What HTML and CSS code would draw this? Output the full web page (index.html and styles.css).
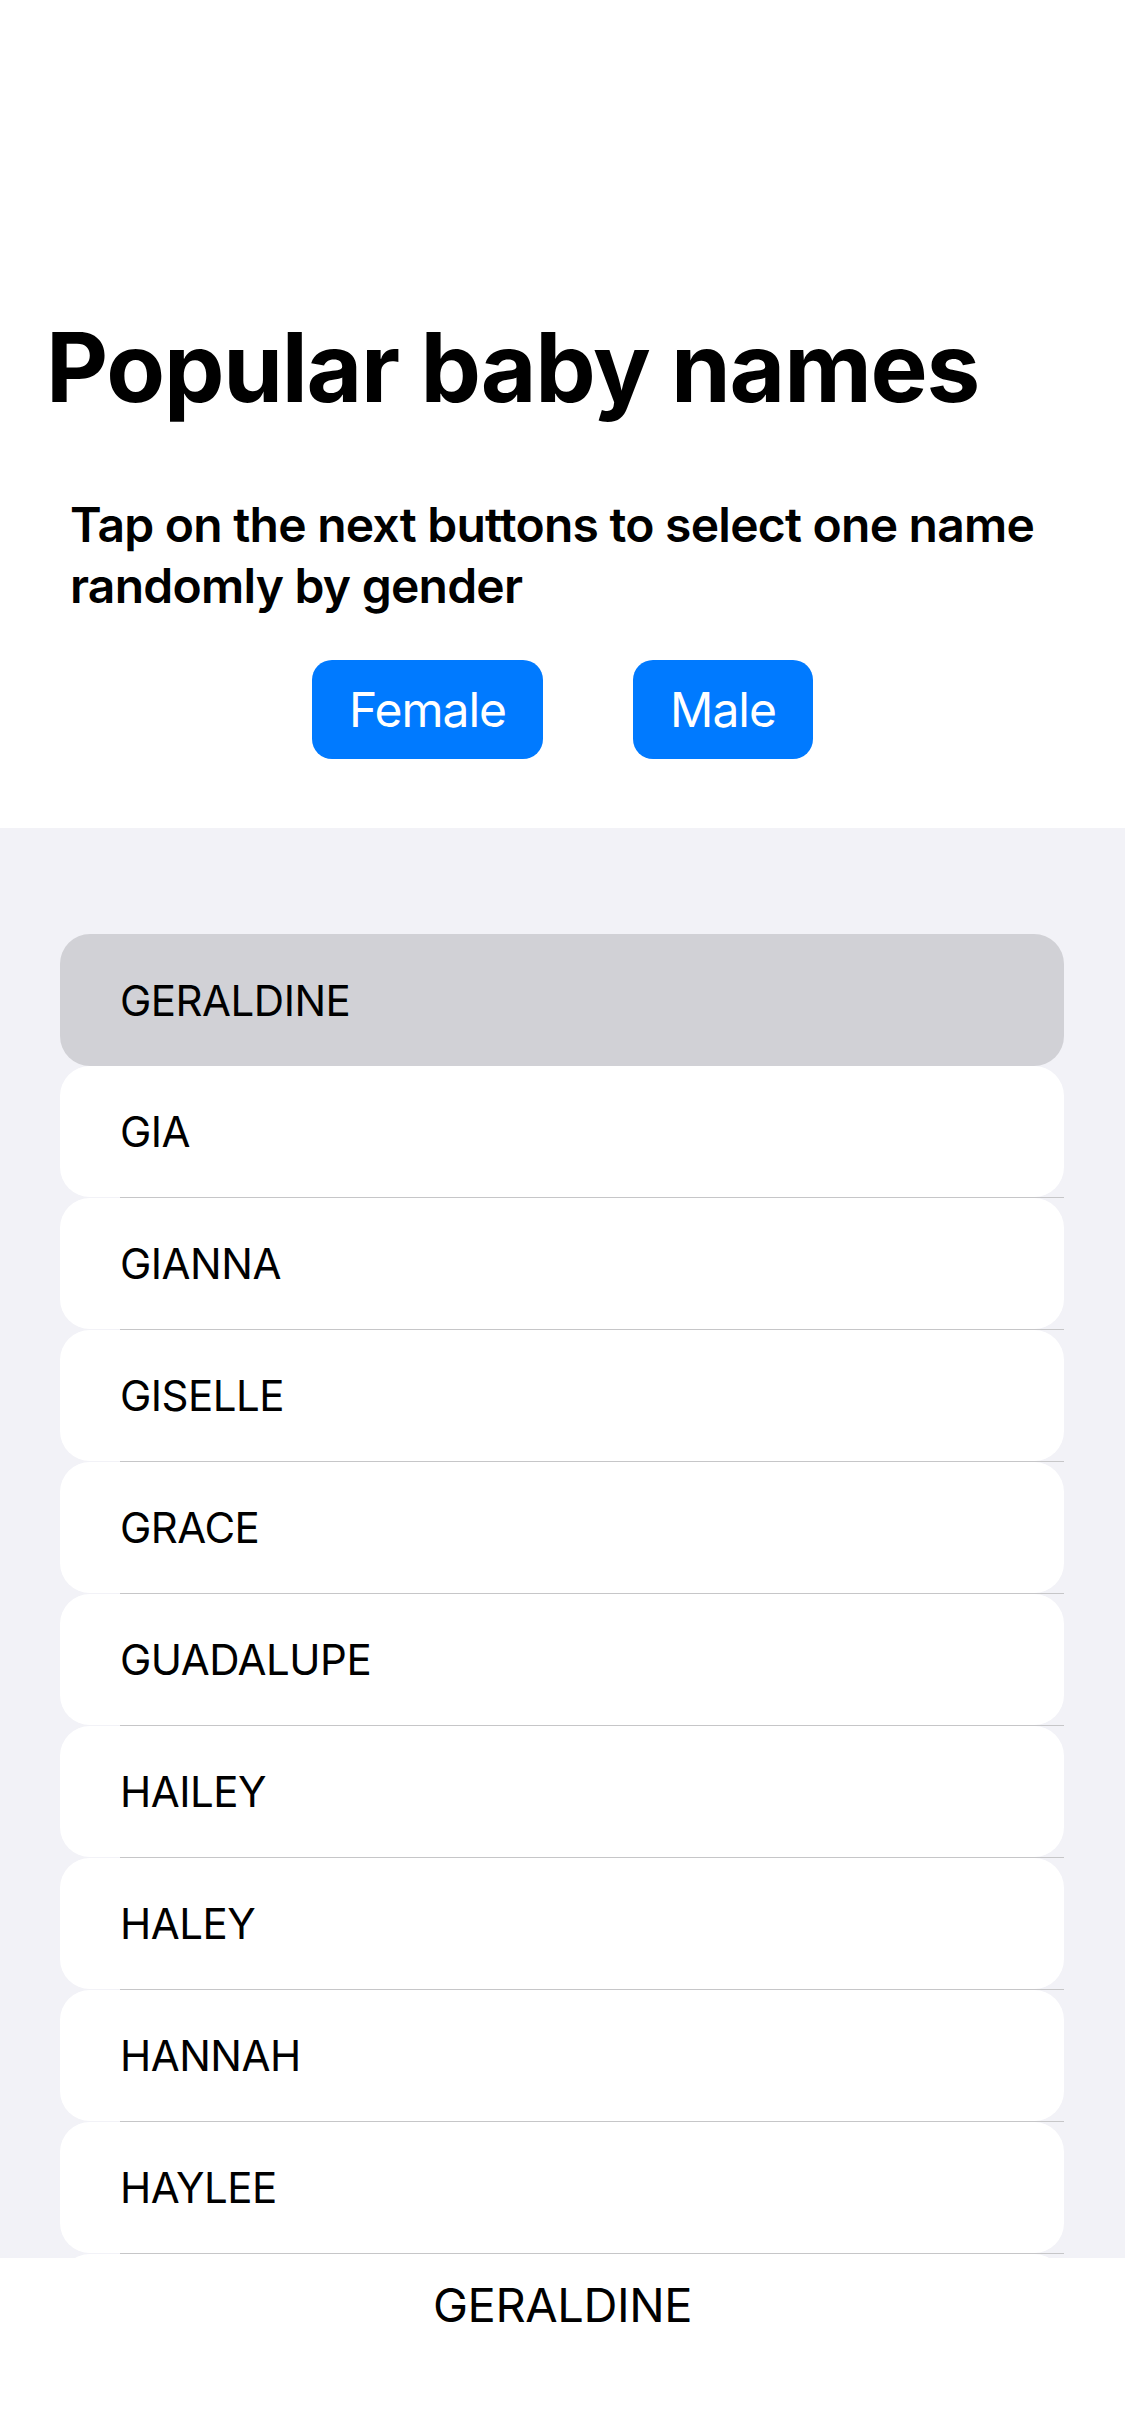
FILE: index.html
```html
<!DOCTYPE html>
<html lang="en">
<head>
<meta charset="utf-8">
<title>Popular baby names</title>
<link rel="stylesheet" href="styles.css">
</head>
<body>
<div class="screen">
  <header class="header">
    <h1 class="title">Popular baby names</h1>
    <p class="subtitle">Tap on the next buttons to select one name randomly by gender</p>
    <div class="buttons">
      <button class="btn">Female</button>
      <button class="btn">Male</button>
    </div>
  </header>
  <main class="list-area">
    <ul class="list">
      <li class="row selected">GERALDINE</li>
      <li class="row">GIA</li>
      <li class="sep"></li>
      <li class="row">GIANNA</li>
      <li class="sep"></li>
      <li class="row">GISELLE</li>
      <li class="sep"></li>
      <li class="row">GRACE</li>
      <li class="sep"></li>
      <li class="row">GUADALUPE</li>
      <li class="sep"></li>
      <li class="row">HAILEY</li>
      <li class="sep"></li>
      <li class="row">HALEY</li>
      <li class="sep"></li>
      <li class="row">HANNAH</li>
      <li class="sep"></li>
      <li class="row">HAYLEE</li>
      <li class="sep"></li>
      <li class="row"></li>
    </ul>
  </main>
  <footer class="footer">GERALDINE</footer>
</div>
</body>
</html>
```
FILE: styles.css
```css
* { box-sizing: border-box; }
html, body {
  margin: 0;
  padding: 0;
  background: #ffffff;
}
body {
  font-family: Inter, "Noto Sans", "Liberation Sans", sans-serif;
  color: #000000;
}
.screen {
  width: 1125px;
  height: 2436px;
  display: flex;
  flex-direction: column;
  overflow: hidden;
}
.header {
  background: #ffffff;
  padding: 309px 0 69px 0;
  flex: 0 0 auto;
}
.title {
  margin: 0;
  padding-left: 46px;
  font-size: 96px;
  line-height: 116px;
  font-weight: 700;
  letter-spacing: -1.2px;
}
.subtitle {
  margin: 69px 0 0 0;
  padding: 0 30px 0 70px;
  font-size: 48px;
  line-height: 61px;
  font-weight: 600;
  letter-spacing: -0.75px;
}
.buttons {
  margin-top: 44px;
  display: flex;
  justify-content: center;
  gap: 90px;
}
.btn {
  height: 99px;
  padding: 0 37px;
  border: none;
  border-radius: 20px;
  background: #007aff;
  color: #ffffff;
  font-family: Inter, "Noto Sans", "Liberation Sans", sans-serif;
  font-size: 48px;
  font-weight: 400;
  line-height: 99px;
  letter-spacing: -1px;
}
.list-area {
  flex: 1 1 auto;
  background: #f2f2f7;
  overflow: hidden;
  padding: 106px 61px 0 60px;
}
.list {
  list-style: none;
  margin: 0;
  padding: 0;
}
.row {
  height: 131px;
  display: flex;
  align-items: center;
  padding-left: 60px;
  background: #ffffff;
  border-radius: 30px;
  font-size: 42px;
  font-weight: 400;
  letter-spacing: -0.5px;
}
.row.selected {
  height: 132px;
  background: #d1d1d6;
}
.sep {
  height: 1px;
  margin-left: 60px;
  background: #c6c6c8;
}
.footer {
  flex: 0 0 178px;
  background: #ffffff;
  text-align: center;
  padding-top: 19px;
  font-size: 47px;
  line-height: 56px;
  font-weight: 400;
  letter-spacing: -0.4px;
}
```
